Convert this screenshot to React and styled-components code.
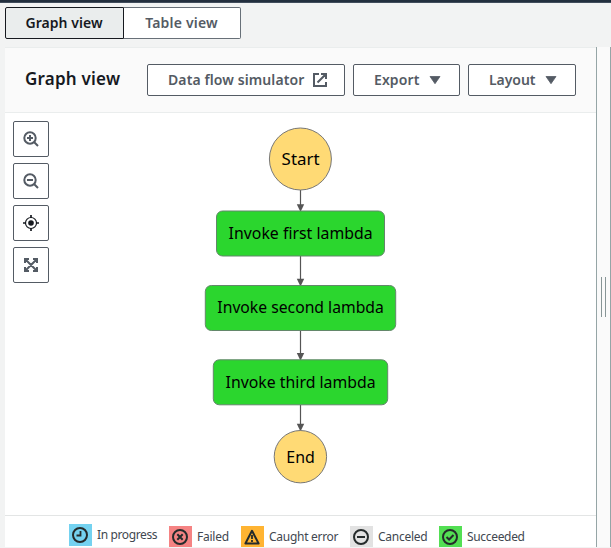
import React from "react";
import styled, { createGlobalStyle } from "styled-components";

const Global = createGlobalStyle`
  * { box-sizing: border-box; }
  body { margin: 0; background: #f2f3f3; font-family: "Noto Sans", "Open Sans", sans-serif; color: #16191f; }
`;

const Page = styled.div`
  width: 611px;
  height: 548px;
  overflow: hidden;
  display: flex;
  flex-direction: column;
  background: #f2f3f3;
`;

const TopBar = styled.div`
  height: 3px;
  flex: none;
  background: #232f3e;
  border-bottom: 1px solid #414d5c;
`;

const Tabs = styled.div`
  display: flex;
  flex: none;
  height: 44px;
  padding: 4px 0 8px 5px;
`;

const Tab = styled.button`
  height: 32px;
  width: ${(p) => (p.$active ? 119 : 117)}px;
  padding: 0 1px 0 0;
  font: 600 14px/20px "Noto Sans", sans-serif;
  letter-spacing: ${(p) => p.$track}px;
  white-space: nowrap;
  color: ${(p) => (p.$active ? "#16191f" : "#545b64")};
  background: ${(p) => (p.$active ? "#eaeded" : "#fff")};
  border: 1px solid ${(p) => (p.$active ? "#16191f" : "#687078")};
  border-left-width: ${(p) => (p.$active ? 1 : 0)}px;
  border-radius: ${(p) => (p.$active ? "2px 0 0 2px" : "0 2px 2px 0")};
`;

const Workspace = styled.div`
  display: flex;
  height: 500px;
  flex: none;
  padding-left: 5px;
`;

const Panel = styled.section`
  width: 591px;
  display: flex;
  flex-direction: column;
  background: #fff;
  border-top: 1px solid #eaeded;
`;

const Header = styled.header`
  display: flex;
  height: 65px;
  flex: none;
  align-items: center;
  padding-left: 20px;
  gap: 8px;
  background: #fafafa;
  border-bottom: 1px solid #eaeded;
`;

const Title = styled.h2`
  width: 114px;
  margin: 0 0 2px;
  font: 600 17px/22px "Noto Sans", sans-serif;
  letter-spacing: ${(p) => p.$track}px;
  white-space: nowrap;
`;

const Button = styled.button`
  display: flex;
  flex: none;
  align-items: center;
  justify-content: space-between;
  width: ${(p) => p.$width}px;
  height: 32px;
  padding: 0 ${(p) => p.$end || 18}px 0 20px;
  border: 1px solid #545b64;
  border-radius: 2px;
  background: #fff;
  color: #545b64;
  font: 600 14px/20px "Noto Sans", sans-serif;
  letter-spacing: ${(p) => p.$track}px;
  white-space: nowrap;
`;

const Canvas = styled.div`
  display: flex;
  height: 402px;
  flex: none;
`;

const Tools = styled.div`
  display: flex;
  flex-direction: column;
  gap: 6px;
  width: 44px;
  padding: 8px 0 0 8px;
`;

const ToolButton = styled.button`
  display: flex;
  align-items: center;
  justify-content: center;
  width: 36px;
  height: 36px;
  flex: none;
  padding: 0;
  background: #fff;
  color: ${(p) => (p.$dark ? "#16191f" : "#545b64")};
  border: 1px solid #545b64;
  border-radius: 2px;
`;

const Diagram = styled.svg`
  display: block;
  width: 547px;
  height: 402px;
  font-family: "Noto Sans", sans-serif;
  font-size: 16px;
`;

const Legend = styled.footer`
  display: flex;
  align-items: flex-start;
  height: 32px;
  padding: 8px 0 0 64px;
  border-top: 1px solid #e3e5e5;
  overflow: hidden;
`;

const LegendItem = styled.div`
  display: flex;
  flex: none;
  align-items: center;
  width: ${(p) => p.$width}px;
  height: 22px;
  margin-top: ${(p) => p.$drop}px;
  font-size: 12px;
  line-height: 22px;
  letter-spacing: ${(p) => p.$track}px;
  white-space: nowrap;
  color: #414750;
`;

const Swatch = styled.span`
  display: flex;
  align-items: center;
  justify-content: center;
  width: 23px;
  height: 22px;
  padding-right: 1px;
  margin-right: 5px;
  background: ${(p) => p.$color};
  color: #252b2b;
`;

const Splitter = styled.div`
  display: flex;
  justify-content: center;
  align-items: center;
  gap: 3px;
  width: 15px;
  background: #fafafa;
  border-left: 1px solid #95a5a6;
  border-right: 1px solid #95a5a6;
`;

const Grip = styled.span`
  width: 1px;
  height: 40px;
  background: #879596;
`;

const Icon = ({ size = 16, children }) => (
  <svg width={size} height={size} viewBox="0 0 16 16" fill="none" stroke="currentColor" strokeWidth="2">
    {children}
  </svg>
);

const External = () => (
  <Icon>
    <path d="M7 2H2v12h12V10M9 2h5v5M5.5 10.5L14 2" />
  </Icon>
);

const Caret = () => (
  <svg width="12" height="8" viewBox="0 0 12 8">
    <path d="M1 .5h10L6 7.7z" fill="currentColor" stroke="currentColor" strokeLinejoin="round" strokeWidth=".8" />
  </svg>
);

const ZoomIn = () => (
  <Icon><circle cx="7" cy="7" r="5.7" /><path d="M11 11l4 4M4 7h6M7 4v6" /></Icon>
);
const ZoomOut = () => (
  <Icon><circle cx="7" cy="7" r="5.7" /><path d="M11 11l4 4M4 7h6" /></Icon>
);
const Center = () => (
  <Icon>
    <circle cx="8" cy="8" r="5.5" strokeWidth="1.2" />
    <circle cx="8" cy="8" r="2.8" fill="currentColor" stroke="none" />
    <path d="M8 0v3M8 13v3M0 8h3M13 8h3" strokeWidth="1.7" />
  </Icon>
);
const Expand = () => (
  <Icon>
    <path d="M2 6V2h4M10 2h4v4M14 10v4h-4M6 14H2v-4M2.5 2.5l11 11M13.5 2.5l-11 11" />
    <path d="M1 1h5L1 6zM15 1v5l-5-5zM15 15h-5l5-5zM1 15v-5l5 5z" fill="currentColor" stroke="none" />
  </Icon>
);

const STATUS_GLYPHS = {
  progress: <><circle cx="8" cy="8" r="7" /><path d="M8.5 4v4.5H4.5" strokeWidth="1.8" /></>,
  failed: <><circle cx="8" cy="8" r="7" /><path d="M5.3 5.3l5.4 5.4M10.7 5.3l-5.4 5.4" /></>,
  caught: <><path d="M8 1.8L14.6 14.5H1.4z" strokeLinejoin="round" /><path d="M8 6v4M8 11v2" strokeWidth="1.8" /></>,
  canceled: <><circle cx="8" cy="8" r="7" /><path d="M4 8h8" /></>,
  done: <><circle cx="8" cy="8" r="7" /><path d="M4.5 8l2.6 2.5 4.4-4.5" /></>,
};

const LEGEND = [
  { id: "progress", label: "In progress", color: "#74d2f0", width: 100, drop: 0, track: -0.38 },
  { id: "failed", label: "Failed", color: "#f58383", width: 72, drop: 2, track: -0.25 },
  { id: "caught", label: "Caught error", color: "#ffb432", width: 109, drop: 2, track: -0.28 },
  { id: "canceled", label: "Canceled", color: "#e2e2e2", width: 89, drop: 2, track: -0.25 },
  { id: "done", label: "Succeeded", color: "#53df53", width: 100, drop: 2, track: -0.33 },
];

const STEPS = [
  { label: "Invoke first lambda", x: 216.5, y: 211, width: 168, textWidth: 144, baseline: 239 },
  { label: "Invoke second lambda", x: 205.3, y: 285.5, width: 190.4, textWidth: 166.5, baseline: 313 },
  { label: "Invoke third lambda", x: 213.3, y: 359.8, width: 174.4, textWidth: 150, baseline: 388 },
];

const ARROWS = [[190, 211], [256, 285.5], [330.5, 359.8], [404.8, 430.5]];

const Terminal = ({ y, r, label, textWidth }) => (
  <g>
    <circle cx="300.4" cy={y} r={r} fill="#ffda75" stroke="#777" strokeWidth="1" />
    <text x="300.6" y={Math.round(y + 6)} textAnchor="middle" textLength={textWidth} lengthAdjust="spacingAndGlyphs">{label}</text>
  </g>
);

const Graph = () => (
  <Diagram viewBox="49 113 547 402">
    {ARROWS.map(([from, to]) => (
      <g key={from}>
        <path d={`M300.5 ${from}V${to - 3}`} stroke="#555" strokeWidth="1.2" />
        <path d={`M296.8 ${to - 6.7}h7.4l-3.7 7.7z`} fill="#555" />
      </g>
    ))}
    <Terminal y={159} r={31} label="Start" textWidth={38} />
    {STEPS.map((s) => (
      <g key={s.label}>
        <rect x={s.x} y={s.y} width={s.width} height="45" rx="6" fill="#2bd62e" stroke="#63876a" />
        <text x="300.6" y={s.baseline} textAnchor="middle" textLength={s.textWidth} lengthAdjust="spacingAndGlyphs">{s.label}</text>
      </g>
    ))}
    <Terminal y={456.7} r={26.2} label="End" textWidth={28.5} />
  </Diagram>
);

export default function App() {
  return (
    <>
      <Global />
      <Page>
        <TopBar />
        <Tabs>
          <Tab $active $track={0.05}>Graph view</Tab>
          <Tab $track={0.2}>Table view</Tab>
        </Tabs>
        <Workspace>
          <Panel>
            <Header>
              <Title $track={0.22}>Graph view</Title>
              <Button $width={198} $track={0.1} $end={16}>Data flow simulator <External /></Button>
              <Button $width={107} $track={0.1}>Export <Caret /></Button>
              <Button $width={108} $track={-0.05}>Layout <Caret /></Button>
            </Header>
            <Canvas>
              <Tools>
                <ToolButton aria-label="Zoom in"><ZoomIn /></ToolButton>
                <ToolButton aria-label="Zoom out"><ZoomOut /></ToolButton>
                <ToolButton aria-label="Center graph" $dark><Center /></ToolButton>
                <ToolButton aria-label="Fit to view"><Expand /></ToolButton>
              </Tools>
              <Graph />
            </Canvas>
            <Legend>
              {LEGEND.map((s) => (
                <LegendItem key={s.id} $width={s.width} $drop={s.drop} $track={s.track}>
                  <Swatch $color={s.color}><Icon>{STATUS_GLYPHS[s.id]}</Icon></Swatch>
                  {s.label}
                </LegendItem>
              ))}
            </Legend>
          </Panel>
          <Splitter><Grip /><Grip /></Splitter>
        </Workspace>
      </Page>
    </>
  );
}
